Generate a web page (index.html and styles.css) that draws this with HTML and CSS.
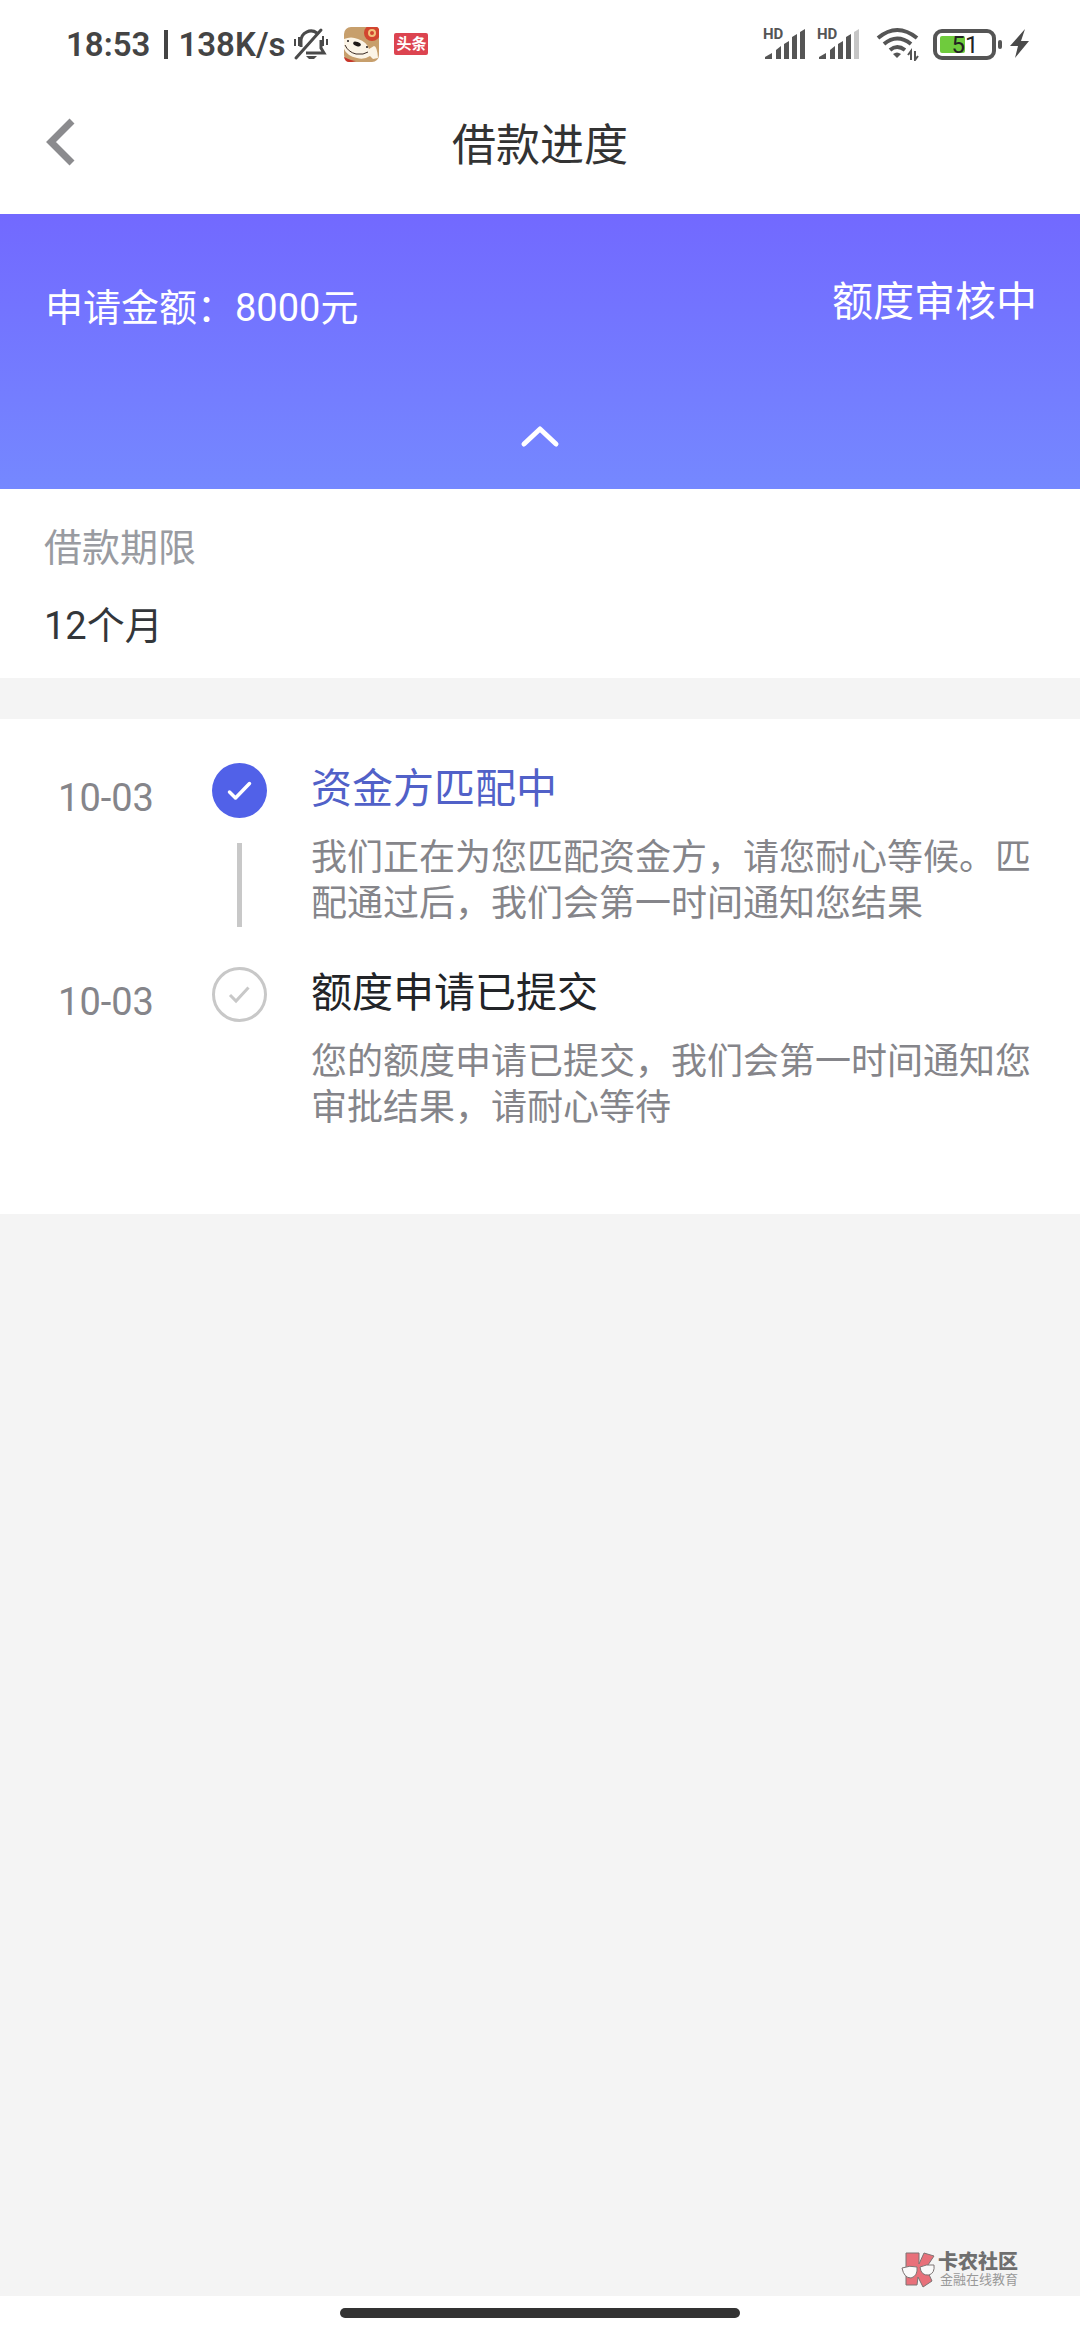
FILE: index.html
```html
<!DOCTYPE html>
<html lang="zh-CN">
<head>
<meta charset="utf-8">
<meta name="viewport" content="width=device-width, initial-scale=1">
<title>借款进度</title>
<link rel="stylesheet" href="styles.css">
</head>
<body>
<div class="status-bar">
  <div class="status-group">
    <span class="status-text">18:53</span>
    <span class="status-divider"></span>
    <span class="status-text">138K/s</span>
    <svg class="icon-bell" width="36" height="36" viewBox="0 0 36 36" fill="none" stroke="#4a4a4a" stroke-width="3">
      <path d="M8 21v-6a10 10 0 0 1 16-8M28 14v8l3 5H13"/>
      <path d="M3 32 28 4" stroke-linecap="round"/>
      <path d="M2 13v7M6 11v9M30 10v10M34 13v6" stroke-width="2"/>
      <path d="M13 30h11l-3 3h-5z" fill="#4a4a4a" stroke="none"/>
    </svg>
    <svg class="icon-dog" width="35" height="35" viewBox="0 0 35 35">
      <rect width="35" height="35" rx="7" fill="#c79f6c"/>
      <circle cx="28" cy="6" r="8" fill="#d2452f"/>
      <circle cx="28" cy="6" r="3" fill="none" stroke="#f2c27a" stroke-width="2"/>
      <path d="M0 30q8 4 12 4l-4 1H5q-4 0-5-5" fill="#c8362a"/>
      <path d="M0 12q7-3 14 0 9 3 11 10l5-3q3 0 4 12l-5 1-3-3q-6 4-13 2Q3 29 0 22z" fill="#fbf4e6"/>
      <path d="M1 18q3 7 11 9 8 1 12-2" fill="none" stroke="#3a2a22" stroke-width="1"/>
      <ellipse cx="13" cy="17" rx="4" ry="2" transform="rotate(20 13 17)" fill="#1f1a18"/>
      <circle cx="4" cy="14" r="1" fill="#1f1a18"/><circle cx="23" cy="20" r="1" fill="#1f1a18"/>
    </svg>
    <span class="news-badge">头条</span>
  </div>
  <div class="status-group">
    <svg class="icon-signal" width="42" height="32" viewBox="0 0 42 32" fill="#555">
      <text x="-1" y="11" class="hd">HD</text>
      <path d="M1 31v-2l7-4v6zM12 31V22l5-4v13zM20 31V16l5-3v18zM28 31V9l5-3v25zM36 31V4l5-3v30z"/>
    </svg>
    <svg class="icon-signal" width="42" height="32" viewBox="0 0 42 32" fill="#555">
      <text x="-1" y="11" class="hd">HD</text>
      <path d="M1 31v-2l7-4v6zM12 31V22l5-4v13zM20 31V16l5-3v18zM28 31V9l5-3v25z"/>
      <path d="M36 31V4l5-3v30z" fill="#c6c6c6"/>
    </svg>
    <svg class="icon-wifi" width="44" height="34" viewBox="0 0 44 34" fill="none" stroke="#555" stroke-width="4">
      <path d="M2 11Q21-5 41 11M8 17q13-11 27 0M14 23q7-6 15 0"/>
      <path d="M17 27q4-3 8 0l-4 4z" fill="#555" stroke="none"/>
      <path d="M35 33v-9l-3 4M39 24v9l3-4" stroke-width="2"/>
    </svg>
    <svg class="icon-battery" width="70" height="32" viewBox="0 0 70 32">
      <rect x="2" y="3" width="59" height="27" rx="7" fill="#fff" stroke="#555" stroke-width="4"/>
      <rect x="7" y="8" width="25" height="17" rx="2" fill="#6fcb3d"/>
      <rect x="65" y="12" width="4" height="9" rx="2" fill="#555"/>
      <text x="32" y="25" class="charge" text-anchor="middle">51</text>
    </svg>
    <svg class="icon-bolt" width="20" height="30" viewBox="0 0 20 30" fill="#4a4a4a"><path d="M15 0 0 17h8L5 29 19 12h-8z"/></svg>
  </div>
</div>

<header class="nav-bar">
  <button class="back" type="button" aria-label="返回">
    <svg width="32" height="48" viewBox="0 0 32 48" fill="none" stroke="#8b8b8e" stroke-width="7"><path d="M28 3 7 24l21 21"/></svg>
  </button>
  <h1 class="nav-title">借款进度</h1>
</header>

<section class="summary">
  <div class="summary-row">
    <p class="amount">申请金额：8000元</p>
    <p class="state">额度审核中</p>
  </div>
  <button class="collapse" type="button" aria-label="收起">
    <svg width="40" height="26" viewBox="0 0 40 26" fill="none" stroke="#fff" stroke-width="5" stroke-linecap="round" stroke-linejoin="round"><path d="M4 21 20 6l16 15"/></svg>
  </button>
</section>

<dl class="term">
  <dt>借款期限</dt>
  <dd>12个月</dd>
</dl>

<ol class="timeline">
  <li class="step step-active">
    <time class="step-date">10-03</time>
    <div class="step-rail">
      <svg class="step-mark" width="55" height="55" viewBox="0 0 110 110" fill="none">
        <circle cx="55" cy="55" r="55" fill="#5161e8"/>
        <path d="M35 58l12 12 28-29" stroke="#fff" stroke-width="7" stroke-linecap="round" stroke-linejoin="round"/>
      </svg>
      <span class="step-line"></span>
    </div>
    <div class="step-body">
      <h2>资金方匹配中</h2>
      <p>我们正在为您匹配资金方，请您耐心等候。匹配通过后，我们会第一时间通知您结果</p>
    </div>
  </li>
  <li class="step">
    <time class="step-date">10-03</time>
    <div class="step-rail">
      <svg class="step-mark" width="55" height="55" viewBox="0 0 110 110" fill="none" stroke="#c8c8c8" stroke-width="6">
        <circle cx="55" cy="55" r="52"/>
        <path d="M36 56l12 12 25-27"/>
      </svg>
    </div>
    <div class="step-body">
      <h2>额度申请已提交</h2>
      <p>您的额度申请已提交，我们会第一时间通知您审批结果，请耐心等待</p>
    </div>
  </li>
</ol>

<footer class="watermark">
  <svg width="35" height="36" viewBox="0 0 35 36" stroke="#7d7474" stroke-width="1">
    <path d="M5 1h13v11l5-11 10 3-8 12 6 13-9 6-5-10-1 8H5z" fill="#e8707a"/>
    <path d="M1 16q8-3 15-1 1 9-6 11-7 0-9-10zM19 15q6-3 14-2 1 8-5 10-8 1-9-8z" fill="#fafafa"/>
  </svg>
  <div>
    <p class="watermark-name">卡农社区</p>
    <p class="watermark-tag">金融在线教育</p>
  </div>
</footer>

<div class="gesture-area"><span class="gesture-bar"></span></div>
</body>
</html>
```

FILE: styles.css
```css
* {
  box-sizing: border-box;
  margin: 0;
  padding: 0;
}

body {
  display: flex;
  flex-direction: column;
  min-height: 100vh;
  background: #f4f4f4;
  color: #222428;
  font-family: Roboto, "Noto Sans CJK SC", sans-serif;
  font-size: 38px;
}

button {
  border: 0;
  background: none;
}

svg {
  display: block;
  flex: none;
}

h1,
h2 {
  font-weight: 400;
}

/* System status bar */
.status-bar {
  display: flex;
  justify-content: space-between;
  align-items: center;
  height: 88px;
  padding: 0 50px 0 66px;
  background: #fff;
}

.status-group {
  display: flex;
  align-items: center;
}

.status-text {
  padding-top: 2px;
  color: #444;
  font-size: 33px;
  font-weight: 600;
  line-height: 40px;
}

.status-divider {
  width: 4px;
  height: 29px;
  margin: 0 10px 0 14px;
  background: #444;
}

.icon-bell {
  margin-left: 8px;
}

.icon-dog {
  margin-left: 15px;
}

.news-badge {
  margin-left: 15px;
  padding: 0 2px;
  border-radius: 2px;
  background: #dc4450;
  color: #fff;
  font-size: 15px;
  font-weight: 700;
  line-height: 22px;
}

.icon-signal {
  margin-right: 12px;
  overflow: visible;
}

.hd {
  font-size: 15px;
  font-weight: 700;
}

.icon-wifi {
  margin-left: 4px;
}

.icon-battery {
  margin-left: 13px;
}

.icon-bolt {
  margin-left: 7px;
}

.charge {
  fill: #222;
  font-size: 24px;
}

/* Navigation */
.nav-bar {
  display: grid;
  grid-template-columns: 120px 1fr 120px;
  align-items: start;
  height: 126px;
  padding-top: 24px;
  background: #fff;
}

.back {
  padding: 6px 0 0 44px;
}

.nav-title {
  color: #333;
  font-size: 44px;
  line-height: 68px;
  text-align: center;
}

/* Amount banner */
.summary {
  padding: 61px 43px 23px;
  background: linear-gradient(#7269ff, #7588ff);
  color: #fff;
}

.summary-row {
  display: flex;
  justify-content: space-between;
  align-items: flex-start;
}

.amount {
  padding-left: 2px;
  line-height: 66px;
}

.state {
  font-size: 41px;
  line-height: 54px;
}

.collapse {
  display: flex;
  justify-content: center;
  align-items: center;
  width: 100px;
  height: 60px;
  margin: 65px auto 0;
}

/* Loan term */
.term {
  display: grid;
  row-gap: 22px;
  padding: 31px 44px 24px;
  background: #fff;
  line-height: 56px;
}

.term dt {
  color: #999ba1;
}

.term dd {
  color: #33363a;
}

/* Progress steps */
.timeline {
  display: grid;
  row-gap: 35px;
  margin-top: 41px;
  padding: 39px 44px 83px 0;
  background: #fff;
  list-style: none;
}

.step {
  display: grid;
  grid-template-columns: 212px 55px 1fr;
}

.step-date {
  padding-top: 12px;
  color: #85858a;
  line-height: 56px;
  text-align: center;
}

.step-rail {
  display: flex;
  flex-direction: column;
  align-items: center;
  padding-top: 5px;
}

.step-line {
  flex: 1;
  width: 5px;
  margin-top: 25px;
  background: #c8c8c8;
}

.step-body {
  padding-left: 44px;
}

.step-body h2 {
  font-size: 41px;
  line-height: 62px;
}

.step-active h2 {
  color: #5161c8;
}

.step-body p {
  margin-top: 15px;
  color: #85858a;
  font-size: 36px;
  line-height: 46px;
}

/* Community mark */
.watermark {
  display: flex;
  justify-content: flex-end;
  align-items: center;
  gap: 2px;
  margin-top: auto;
  padding: 0 62px 8px;
}

.watermark-name {
  color: #6f6f6f;
  font-size: 20px;
  font-weight: 900;
  line-height: 20px;
}

.watermark-tag {
  padding-left: 2px;
  color: #999;
  font-size: 13px;
  line-height: 16px;
}

.gesture-area {
  display: flex;
  justify-content: center;
  height: 44px;
  padding-top: 12px;
  background: #fff;
}

.gesture-bar {
  width: 37%;
  height: 10px;
  border-radius: 5px;
  background: #333;
}
```
